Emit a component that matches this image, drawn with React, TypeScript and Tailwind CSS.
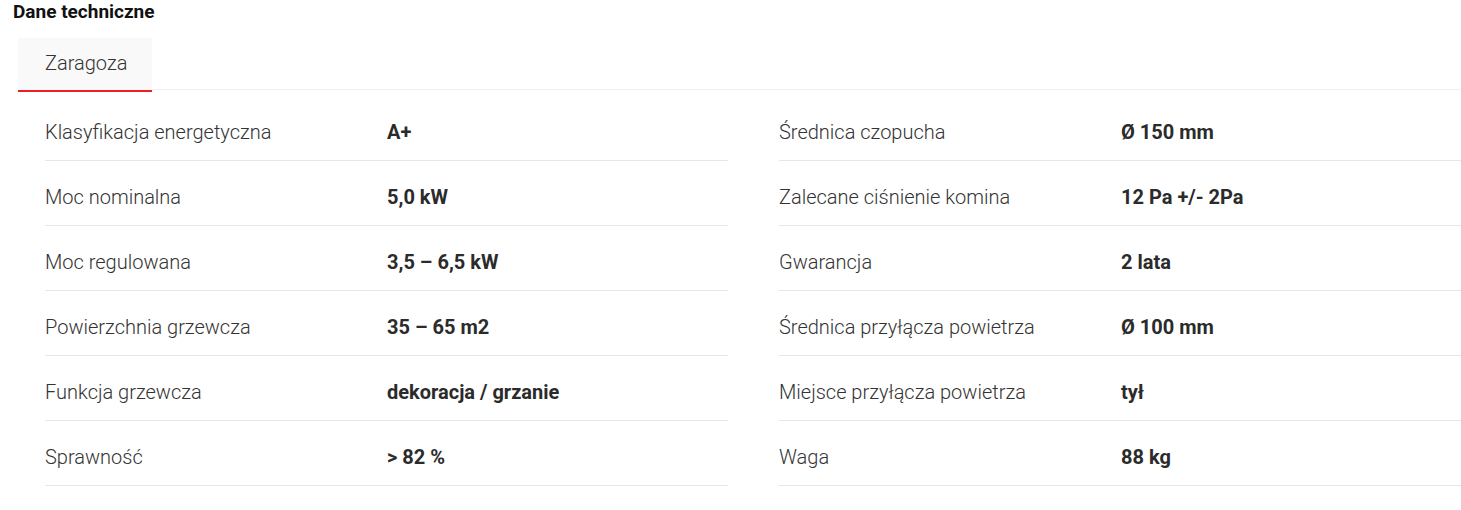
import React from "react";

const left: [string, string][] = [
  ["Klasyfikacja energetyczna", "A+"],
  ["Moc nominalna", "5,0 kW"],
  ["Moc regulowana", "3,5 – 6,5 kW"],
  ["Powierzchnia grzewcza", "35 – 65 m2"],
  ["Funkcja grzewcza", "dekoracja / grzanie"],
  ["Sprawność", "> 82 %"],
];

const right: [string, string][] = [
  ["Średnica czopucha", "Ø 150 mm"],
  ["Zalecane ciśnienie komina", "12 Pa +/- 2Pa"],
  ["Gwarancja", "2 lata"],
  ["Średnica przyłącza powietrza", "Ø 100 mm"],
  ["Miejsce przyłącza powietrza", "tył"],
  ["Waga", "88 kg"],
];

function Column({ rows }: { rows: [string, string][] }) {
  return (
    <div className="flex flex-col">
      {rows.map(([k, v]) => (
        <div
          key={k}
          className="flex border-b border-[#e6e6e6] pt-[21px] pb-[13px] text-[20px] leading-[30px]"
        >
          <div className="w-[342px] shrink-0 font-light text-[#333333]">{k}</div>
          <div className="font-bold text-[#2b2b2b]">{v}</div>
        </div>
      ))}
    </div>
  );
}

export default function App() {
  return (
    <div
      className="w-[1461px] h-[510px] overflow-hidden bg-white"
      style={{ fontFamily: "Roboto, 'Liberation Sans', sans-serif" }}
    >
      <h2 className="pt-[2px] pl-[13px] text-[19px] leading-[19px] font-bold text-[#111111]">
        Dane techniczne
      </h2>
      <div className="mt-[17px] ml-[18px] flex border-b border-[#f1f1f1]">
        <div className="relative z-10 -mb-[3px] w-[134px] bg-[#f9f9f9] border-b-2 border-[#ee1c24] pl-[27px] pt-[10px] pb-[12px] text-[20px] leading-[30px] font-light text-[#333333]">
          Zaragoza
        </div>
      </div>
      <div className="mt-[6px] pl-[45px] grid grid-cols-[683px_682px] gap-x-[51px]">
        <Column rows={left} />
        <Column rows={right} />
      </div>
    </div>
  );
}
